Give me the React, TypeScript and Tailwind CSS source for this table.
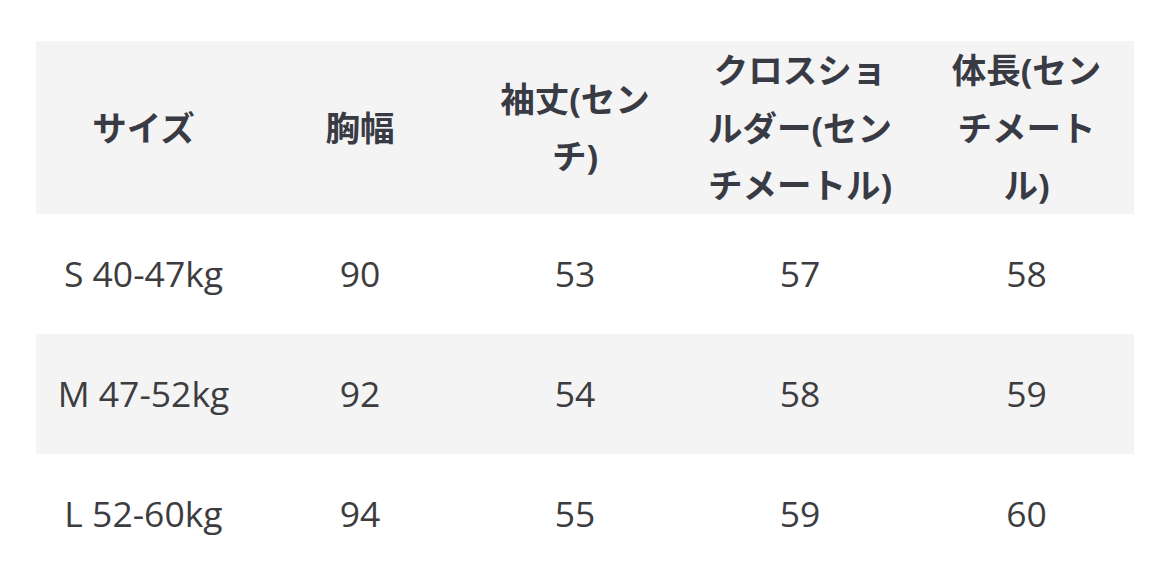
const headers = [
  "サイズ",
  "胸幅",
  "袖丈(センチ)",
  "クロスショルダー(センチメートル)",
  "体長(センチメートル)",
];

const rows = [
  ["S 40-47kg", "90", "53", "57", "58"],
  ["M 47-52kg", "92", "54", "58", "59"],
  ["L 52-60kg", "94", "55", "59", "60"],
];

export default function App() {
  return (
    <div className="min-h-[569px] bg-white pt-[41px] px-[36px] font-['Open_Sans','Noto_Sans_CJK_JP',sans-serif]">
      <table className="w-[1098px] table-fixed border-collapse">
        <colgroup>
          <col className="w-[215px]" />
          <col className="w-[218px]" />
          <col className="w-[212px]" />
          <col className="w-[238px]" />
          <col className="w-[215px]" />
        </colgroup>
        <thead>
          <tr className="h-[171px] bg-[#f4f4f5]">
            {headers.map((h) => (
              <th
                key={h}
                className="px-6 text-center align-middle text-[34.5px] font-bold leading-[57.5px] text-[#393b44]"
              >
                {h}
              </th>
            ))}
          </tr>
        </thead>
        <tbody>
          {rows.map((r, i) => (
            <tr
              key={r[0]}
              className={i % 2 === 1 ? "h-[120px] bg-[#f4f4f5]" : "h-[120px] bg-white"}
            >
              {r.map((c, j) => (
                <td
                  key={j}
                  className="px-4 text-center align-middle text-[35.5px] leading-none text-[#3d3d40]"
                >
                  {c}
                </td>
              ))}
            </tr>
          ))}
        </tbody>
      </table>
    </div>
  );
}
